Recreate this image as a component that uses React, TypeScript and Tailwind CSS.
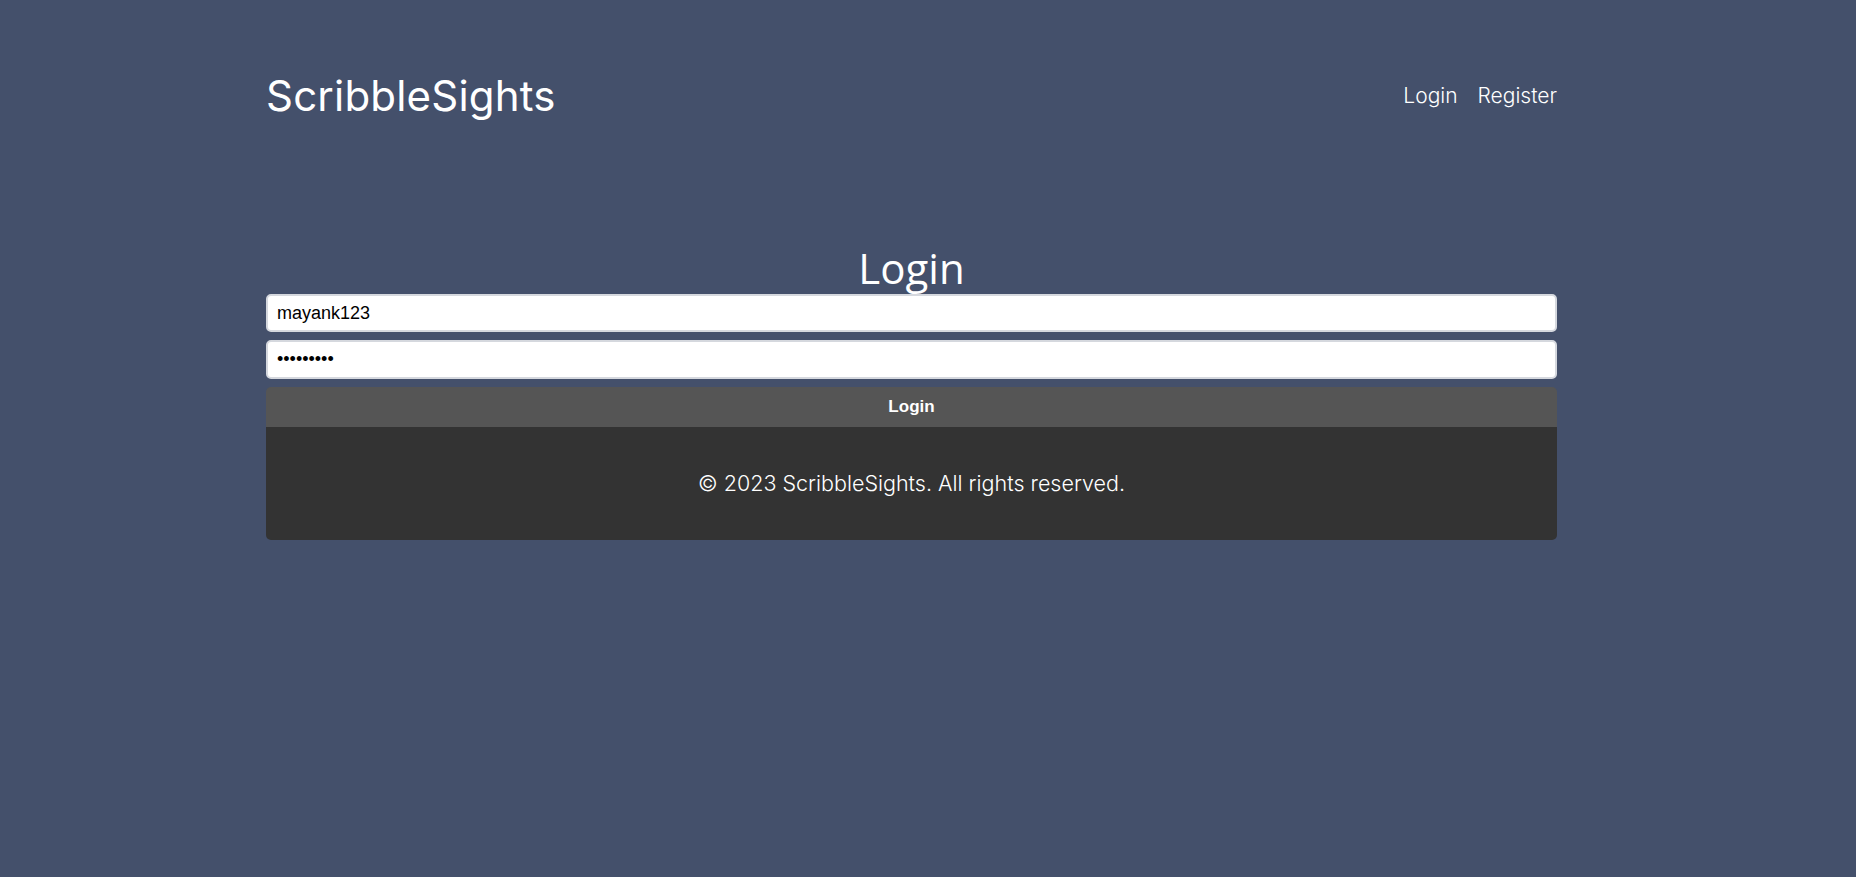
import React from "react";

export default function App() {
  return (
    <div className="min-h-[877px] w-full bg-[#44506b] font-['Inter',sans-serif] text-white">
      <div className="ml-[266px] w-[1291px] pt-[66px]">
        <header className="flex items-center justify-between">
          <h1 className="text-[42px] font-normal leading-[60px] tracking-[0.2px]">ScribbleSights</h1>
          <nav className="flex gap-[20px] text-[21px] font-light">
            <a href="#">Login</a>
            <a href="#">Register</a>
          </nav>
        </header>

        <main className="mt-[116px] flex flex-col">
          <h2 className="text-center font-['Open_Sans',sans-serif] text-[42px] font-normal leading-[52px]">Login</h2>
          <form className="flex flex-col gap-[8px]" onSubmit={(e) => e.preventDefault()}>
            <input
              type="text"
              defaultValue="mayank123"
              className="h-[38px] rounded-[5px] border-2 border-[#d5d8de] bg-white px-[9px] font-['Liberation_Sans',Arial,sans-serif] text-[18px] text-black outline-none"
            />
            <input
              type="password"
              defaultValue="password1"
              className="h-[39px] rounded-[5px] border-2 border-[#d5d8de] bg-white px-[9px] font-['Liberation_Sans',Arial,sans-serif] text-[18px] text-black outline-none"
            />
            <button className="h-[40px] rounded-t-[5px] bg-[#555555] font-['Liberation_Sans',Arial,sans-serif] text-[17px] font-semibold text-white">
              Login
            </button>
          </form>
          <footer className="flex h-[113px] items-center justify-center rounded-b-[5px] bg-[#333333] text-[21.5px] font-light">
            © 2023 ScribbleSights. All rights reserved.
          </footer>
        </main>
      </div>
    </div>
  );
}
